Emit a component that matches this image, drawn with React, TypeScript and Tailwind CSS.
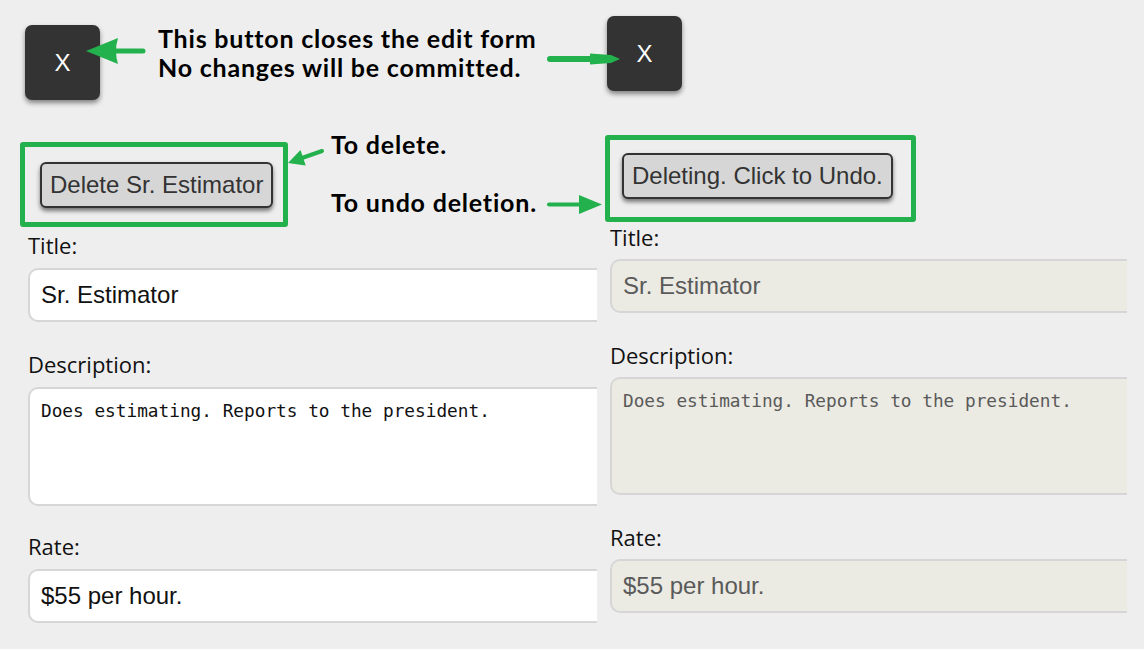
import React from "react";

const GREEN = "#22b14c";

function CloseButton({ className }: { className: string }) {
  return (
    <button
      className={
        "w-[75px] h-[75px] shrink-0 rounded-[7px] bg-[#333333] shadow-[0_3px_5px_rgba(0,0,0,0.45)] flex items-center justify-center text-white text-[24px] leading-none font-['Liberation_Sans',Arial,sans-serif] " +
        className
      }
    >
      X
    </button>
  );
}

function GreyButton({ label }: { label: string }) {
  return (
    <button className="h-[46px] px-[8px] rounded-[6px] border-2 border-[#333333] bg-[#d6d6d6] shadow-[0_3px_4px_rgba(0,0,0,0.5)] text-[24px] leading-none text-[#333333] font-['Liberation_Sans',Arial,sans-serif] whitespace-nowrap">
      {label}
    </button>
  );
}

function Label({ text, className = "" }: { text: string; className?: string }) {
  return (
    <div
      className={
        "h-[30px] leading-[30px] text-[22px] text-[#111111] font-['Open_Sans','Noto_Sans',sans-serif] " +
        className
      }
    >
      {text}
    </div>
  );
}

function EditForm({ deleted = false }: { deleted?: boolean }) {
  const box = deleted
    ? "bg-[#ebeae3] text-[#5a5a5a]"
    : "bg-white text-[#111111]";
  const w = deleted ? "w-[517px]" : "w-[569px]";
  const gap = deleted ? "mt-[7px]" : "mt-[8px]";
  const area = deleted ? "h-[118px]" : "h-[119px]";
  const field =
    "block border-2 border-r-0 border-[#d6d6d6] rounded-l-[10px] outline-none " +
    w +
    " " +
    box +
    " " +
    gap;

  return (
    <div className="flex flex-col">
      <Label text="Title:" />
      <input
        readOnly
        value="Sr. Estimator"
        className={
          field +
          " h-[54px] px-[11px] text-[24px] font-['Liberation_Sans',Arial,sans-serif]"
        }
      />
      <Label text="Description:" className="mt-[27px]" />
      <textarea
        readOnly
        value="Does estimating. Reports to the president."
        className={
          field +
          " " +
          area +
          " resize-none px-[11px] pt-[11px] text-[17.75px] leading-[22px] font-['DejaVu_Sans_Mono',monospace]"
        }
      />
      <Label text="Rate:" className={deleted ? "mt-[27px]" : "mt-[25px]"} />
      <input
        readOnly
        value="$55 per hour."
        className={
          field +
          " h-[54px] px-[11px] text-[24px] font-['Liberation_Sans',Arial,sans-serif]"
        }
      />
    </div>
  );
}

function Arrows() {
  return (
    <svg
      className="absolute left-0 top-0 pointer-events-none"
      width="1144"
      height="649"
      viewBox="0 0 1144 649"
    >
      {/* to the first close button */}
      <path d="M86 51 L118 38 Q114 51 118 64 Z" fill={GREEN} />
      <line x1="114" y1="51" x2="143" y2="51" stroke={GREEN} strokeWidth="5" strokeLinecap="round" />

      {/* to the second close button */}
      <line x1="550" y1="59" x2="594" y2="59" stroke={GREEN} strokeWidth="6" strokeLinecap="round" />
      <path d="M590 53.5 L611 55 L620 59 L611 63 L590 64.5 Z" fill={GREEN} />

      {/* to delete */}
      <line x1="302" y1="158" x2="322" y2="151" stroke={GREEN} strokeWidth="4" strokeLinecap="round" />
      <path d="M288 163 L300.5 150 L305.7 165.6 Z" fill={GREEN} />

      {/* to undo */}
      <line x1="549" y1="204.5" x2="581" y2="204.5" stroke={GREEN} strokeWidth="4" strokeLinecap="round" />
      <path d="M579 195 L602 204.5 L579 214 Z" fill={GREEN} />
    </svg>
  );
}

export default function App() {
  const note = "text-[25px] tracking-[0.8px] font-bold text-black font-['Lato','Open_Sans',sans-serif] whitespace-nowrap";

  return (
    <div className="relative w-[1144px] h-[649px] overflow-hidden bg-[#eeeeee] flex">
      {/* Left: the form before deleting */}
      <div className="w-[597px] shrink-0 flex flex-col">
        <div className="flex items-start h-[100px]">
          <CloseButton className="mt-[25px] ml-[25px]" />
          <div className={"mt-[24px] ml-[58px] leading-[29px] " + note}>
            <div>This button closes the edit form</div>
            <div>No changes will be committed.</div>
          </div>
        </div>

        <div className="flex items-start">
          <div className="mt-[42px] ml-[20px] w-[268px] h-[85px] shrink-0 border-[5px] border-[#22b14c] rounded-[3px] pl-[15px] pt-[15px]">
            <GreyButton label="Delete Sr. Estimator" />
          </div>
          <div className={"ml-[43px] mt-[29px] " + note}>
            <div className="h-[30px] leading-[30px]">To delete.</div>
            <div className="h-[30px] leading-[30px] mt-[28px]">To undo deletion.</div>
          </div>
        </div>

        <div className="pl-[28px] mt-[3px]">
          <EditForm />
        </div>
      </div>

      {/* Right: the form marked for deletion */}
      <div className="ml-[8px] w-[522px] shrink-0 flex flex-col">
        <div className="h-[91px]">
          <CloseButton className="mt-[16px] ml-[2px]" />
        </div>
        <div className="mt-[44px] w-[311px] h-[87px] border-[5px] border-[#22b14c] rounded-[3px] pl-[12px] pt-[13px]">
          <GreyButton label="Deleting. Click to Undo." />
        </div>
        <div className="pl-[5px]">
          <EditForm deleted />
        </div>
      </div>

      <Arrows />
    </div>
  );
}
